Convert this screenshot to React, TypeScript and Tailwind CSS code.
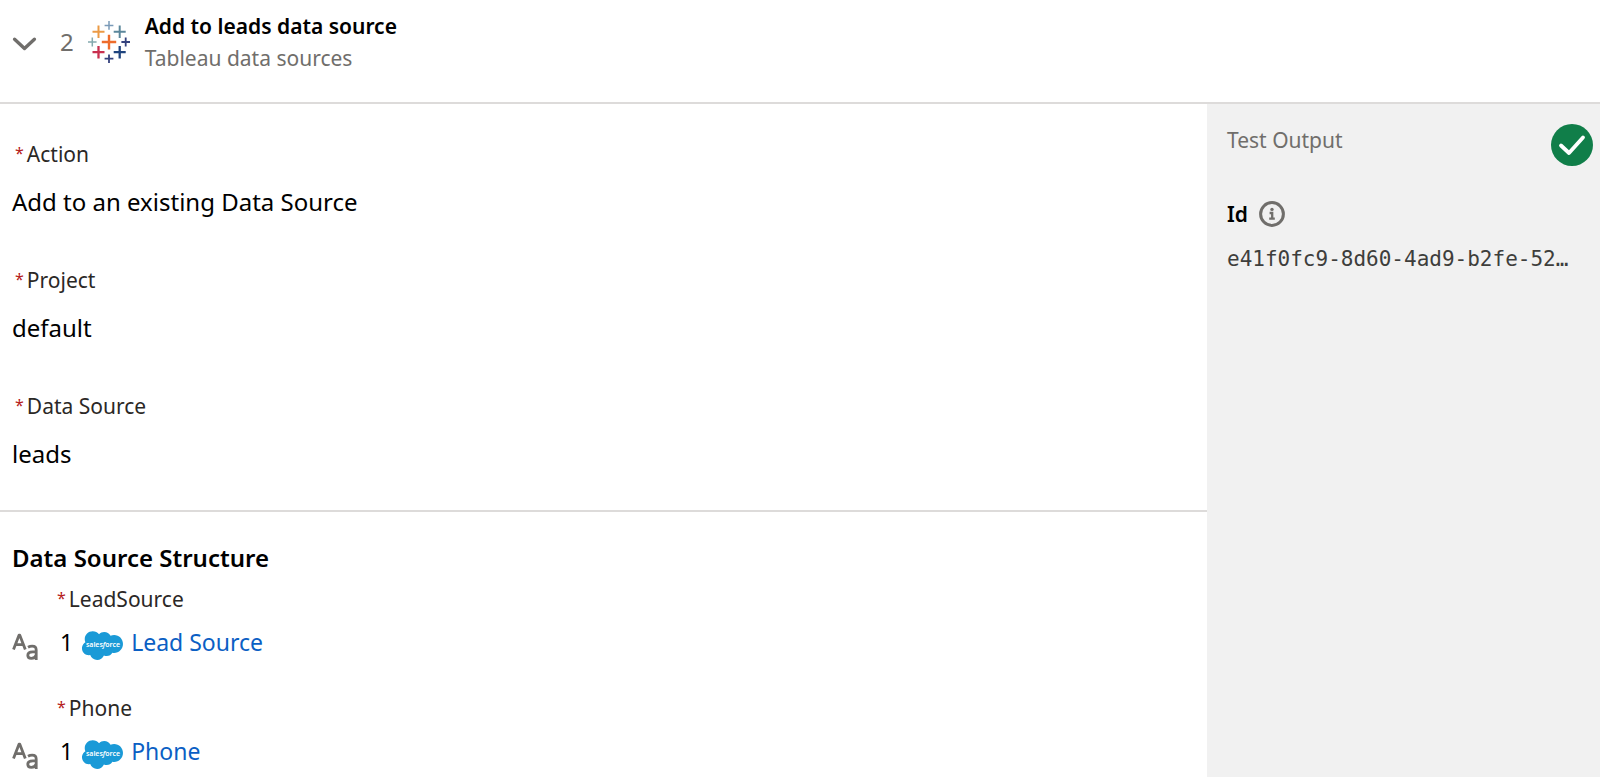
import type { ReactNode } from "react";

const fields = [
  { label: "Action", value: "Add to an existing Data Source" },
  { label: "Project", value: "default" },
  { label: "Data Source", value: "leads" },
];

const mappings = [
  { column: "LeadSource", step: 1, source: "Lead Source" },
  { column: "Phone", step: 1, source: "Phone" },
];

function TableauLogo() {
  return (
    <svg className="size-[42px] shrink-0" viewBox="0 0 42 42" fill="none" aria-hidden="true">
      <path d="M21 13.8v14.6M13.8 21h14.4" stroke="#ee6c2b" strokeWidth="2.4" />
      <path d="M10.5 4.5v12.4M4.5 10.7h12" stroke="#eb9a45" strokeWidth="2" />
      <path d="M31.7 4.5v12.4M25.7 10.7h12" stroke="#5b879b" strokeWidth="2" />
      <path d="M10.5 25v12.4M4.5 31.2h12" stroke="#c9304f" strokeWidth="2.3" />
      <path d="M31.7 25v12.4M25.7 31.2h12" stroke="#1f447e" strokeWidth="2.3" />
      <path d="M21 0v8.8M16.6 4.4h8.8" stroke="#7a9ab8" strokeWidth="1.5" />
      <path d="M4.3 16.6v8.8M0 21h8.6" stroke="#84a9ae" strokeWidth="1.5" />
      <path d="M37.7 16.6v8.8M33.4 21H42" stroke="#35427d" strokeWidth="1.8" />
      <path d="M21 33.4V42M16.6 37.6h8.8" stroke="#35427d" strokeWidth="1.8" />
    </svg>
  );
}

function SalesforceLogo() {
  return (
    <svg className="h-[29px] w-[41px] shrink-0" viewBox="0 0 272 191" aria-hidden="true">
      <path
        fill="#1a9ad7"
        d="M113 21.3c8.78-9.14 21-14.8 34.5-14.8 18 0 33.6 10 42 24.9a58 58 0 0 1 23.7-5.05c32.4 0 58.7 26.5 58.7 59.2s-26.3 59.2-58.7 59.2c-3.96 0-7.82-.4-11.6-1.15-7.35 13.1-21.4 22-37.4 22a42.7 42.7 0 0 1-18.8-4.32c-7.45 17.5-24.8 29.8-45 29.8-21.1 0-39-13.3-45.9-32a45.1 45.1 0 0 1-9.34.97c-25.1 0-45.4-20.6-45.4-45.9 0-17 9.14-31.8 22.7-39.8a52.6 52.6 0 0 1-4.35-21c0-29.2 23.7-52.8 52.9-52.8 17.1 0 32.4 8.15 42 20.8z"
      />
      <text
        x="139"
        y="104"
        textAnchor="middle"
        fill="#fff"
        fontFamily="Noto Sans, sans-serif"
        fontSize="46"
        fontWeight="600"
      >
        sales<tspan fontStyle="italic">f</tspan>orce
      </text>
    </svg>
  );
}

function TextTypeIcon() {
  return (
    <svg
      className="mt-2 h-[28px] w-[26px] shrink-0"
      viewBox="0 0 26 28"
      fill="none"
      stroke="#706e6b"
      strokeWidth="2.8"
      strokeLinejoin="round"
      aria-hidden="true"
    >
      <path d="M1.5 17.6 7 3.2h.8l5.5 14.4M3.6 12.6h7.6" />
      <path d="M16 15.2c1.4-.8 2.8-1.1 4.2-1.1 2.7 0 4 1.3 4 3.8V28M24.2 19.8h-3.4c-3.2 0-5 1.2-5 3.4 0 2 1.5 3.2 3.5 3.2 2.3 0 4.2-1.4 4.9-3.4" />
    </svg>
  );
}

function RequiredLabel({ children }: { children: ReactNode }) {
  return (
    <dt className="flex gap-[3px] pl-[3px] text-[21px] leading-[30px] text-[#2b2826]">
      <span className="text-base leading-7 text-[#b5201a]">*</span>
      {children}
    </dt>
  );
}

export default function App() {
  return (
    <div className="flex min-h-screen flex-col bg-white font-['Noto_Sans',sans-serif] text-black">
      <header className="flex items-start border-b-2 border-[#dddbda] pt-2.5 pb-7">
        <button type="button" aria-label="Collapse step" className="mt-5 ml-3">
          <svg className="h-6 w-[25px]" viewBox="0 0 25 24" fill="none" stroke="#706e6b" strokeWidth="3.4" strokeLinecap="round" strokeLinejoin="round">
            <path d="M2.6 9.2 12.5 18.4l9.9-9.2" />
          </svg>
        </button>
        <span className="mt-3.5 ml-[23px] text-2xl leading-9 text-[#706e6b]">2</span>
        <div className="mt-[11px] ml-[14px]">
          <TableauLogo />
        </div>
        <div className="ml-[15px]">
          <h1 className="text-[21px] leading-8 font-semibold">Add to leads data source</h1>
          <p className="text-[21px] leading-8 text-[#706e6b]">Tableau data sources</p>
        </div>
      </header>

      <div className="flex flex-1">
        <main className="min-w-0 flex-1">
          <section className="border-b-2 border-[#dddbda] px-3 pt-[35px] pb-[38px]">
            <dl className="flex flex-col gap-[45px]">
              {fields.map((field) => (
                <div key={field.label}>
                  <RequiredLabel>{field.label}</RequiredLabel>
                  <dd className="mt-[15px] text-2xl leading-9">{field.value}</dd>
                </div>
              ))}
            </dl>
          </section>

          <section className="px-3 pt-7 pb-2">
            <h2 className="text-2xl leading-9 font-semibold">Data Source Structure</h2>
            <dl className="mt-2 flex flex-col gap-[33px]">
              {mappings.map((mapping) => (
                <div key={mapping.column}>
                  <div className="pl-[42px]">
                    <RequiredLabel>{mapping.column}</RequiredLabel>
                  </div>
                  <dd className="mt-2.5 flex h-9 text-[23px] leading-9">
                    <TextTypeIcon />
                    <span className="ml-[22px]">{mapping.step}</span>
                    <span className="mt-[7px] ml-[9px]">
                      <SalesforceLogo />
                    </span>
                    <a href="#" className="ml-2 text-[#0b5fc4]">
                      {mapping.source}
                    </a>
                  </dd>
                </div>
              ))}
            </dl>
          </section>
        </main>

        <aside className="w-[393px] shrink-0 bg-[#f1f1f1] pt-5 pr-[7px] pl-5">
          <div className="flex items-start justify-between">
            <h2 className="text-[21px] leading-8 text-[#706e6b]">Test Output</h2>
            <svg className="size-[42px]" viewBox="0 0 42 42" fill="none" role="img" aria-label="Success">
              <circle cx="21" cy="21" r="21" fill="#107e49" />
              <path d="m10 21.5 8 7.5 14-15.5" stroke="#fff" strokeWidth="3.8" strokeLinecap="round" strokeLinejoin="round" />
            </svg>
          </div>
          <div className="mt-8 flex items-center gap-[11px]">
            <h3 className="text-[21px] leading-8 font-semibold">Id</h3>
            <button type="button" aria-label="About this id">
              <svg className="size-[26px]" viewBox="0 0 26 26" fill="none">
                <circle cx="13" cy="13" r="11.4" stroke="#706e6b" strokeWidth="3" />
                <circle cx="13" cy="8.4" r="1.7" fill="#706e6b" />
                <path d="M10.6 12h2.6v5.6M10.2 17.7h5.6" stroke="#706e6b" strokeWidth="2.3" />
              </svg>
            </button>
          </div>
          <p className="mt-[13px] font-['DejaVu_Sans_Mono',monospace] text-[21px] leading-8 text-[#3e3e3c]">
            e41f0fc9-8d60-4ad9-b2fe-52…
          </p>
        </aside>
      </div>
    </div>
  );
}
